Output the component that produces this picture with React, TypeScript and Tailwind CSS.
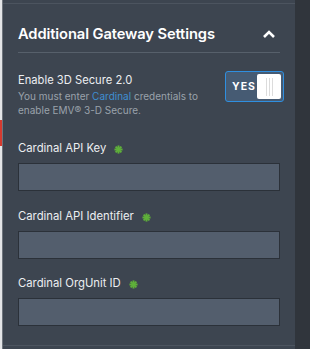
import React from 'react';

function Asterisk() {
  return (
    <svg width="9" height="9" viewBox="0 0 10 10" className="ml-[8px] mt-[3px] shrink-0">
      <g stroke="#5fb13a" strokeWidth="2.2" strokeLinecap="butt">
        <line x1="5" y1="0.5" x2="5" y2="9.5" />
        <line x1="0.5" y1="5" x2="9.5" y2="5" />
        <line x1="1.8" y1="1.8" x2="8.2" y2="8.2" />
        <line x1="8.2" y1="1.8" x2="1.8" y2="8.2" />
      </g>
    </svg>
  );
}

function Field({ label, className = '' }: { label: string; className?: string }) {
  return (
    <div className={className}>
      <div className="flex items-center h-4 text-[11.3px] text-[#eceef0]">
        <span>{label}</span>
        <Asterisk />
      </div>
      <div className="mt-[7px] h-[28px] bg-[#535e6d] border border-[#2b3139]" />
    </div>
  );
}

export default function App() {
  return (
    <div
      className="flex h-[349px] w-[310px] overflow-hidden bg-[#3d4550]"
      style={{ fontFamily: 'Inter, "Liberation Sans", Arial, sans-serif' }}
    >
      {/* page edge peeking out behind the panel */}
      <div className="w-[2px] flex flex-col bg-[#e4e5e7]">
        <div className="h-[120px]" />
        <div className="h-[26px] bg-[#d63a2f]" />
      </div>
      <div className="w-px bg-[#6f757d]" />

      <div className="flex-1 flex flex-col">
        <div className="h-[3px]" />
        <div className="h-px bg-[#4c545f]" />

        <div className="px-[15px] pt-[20px]">
          {/* Header */}
          <div className="flex items-center justify-between h-5">
            <h2 className="text-[14.7px] font-semibold text-white tracking-[-0.1px]">
              Additional Gateway Settings
            </h2>
            <svg width="14" height="10" viewBox="0 0 14 10" className="mr-[4px]">
              <path d="M2 8 L7 3 L12 8" fill="none" stroke="#ffffff" strokeWidth="2.6" />
            </svg>
          </div>
          <div className="mt-2 h-px bg-[#57606b]" />

          {/* 3D Secure toggle */}
          <div className="mt-[18px] flex items-start justify-between">
            <div className="mt-px">
              <p className="text-[11.2px] leading-4 text-[#eceef0]">Enable 3D Secure 2.0</p>
              <p className="mt-[1px] text-[10px] leading-[14px] text-[#9aa2ab]">
                You must enter <span className="text-[#3f8fd2]">Cardinal</span> credentials to
                <br />
                enable EMV® 3-D Secure.
              </p>
            </div>
            <div className="-mr-[4px] flex items-center w-[59px] h-[31px] rounded-[3px] border border-[#2f8fe0] bg-[#465b73] pl-[6px] pr-[2px]">
              <span className="text-[10.5px] font-bold tracking-[1px] text-white">YES</span>
              <div className="ml-auto w-[24px] h-[25px] rounded-[2px] bg-white flex items-center justify-center gap-[2px]">
                <div className="w-px h-[18px] bg-[#dcdcdc]" />
                <div className="w-px h-[18px] bg-[#dcdcdc]" />
                <div className="w-px h-[18px] bg-[#dcdcdc]" />
              </div>
            </div>
          </div>

          <Field label="Cardinal API Key" className="mt-[23px]" />
          <Field label="Cardinal API Identifier" className="mt-[17px]" />
          <Field label="Cardinal OrgUnit ID" className="mt-[16px]" />
        </div>

        <div className="mt-auto mb-[3px] h-px bg-[#4c545f]" />
      </div>

      <div className="w-[15px] bg-[#30353c]" />
    </div>
  );
}
